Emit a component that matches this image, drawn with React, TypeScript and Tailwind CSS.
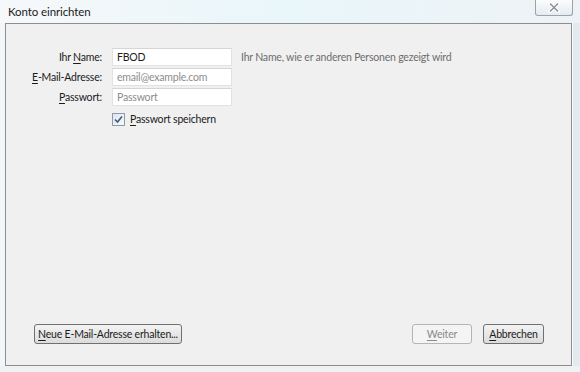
const font = { fontFamily: 'Lato, "Liberation Sans", sans-serif' };

const Key = ({ children }: { children: string }) => <span className="underline underline-offset-[2px]">{children}</span>;

const Field = ({ label, keyChar, rest, value, placeholder }: { label?: string; keyChar: string; rest: string; value?: string; placeholder?: string }) => (
  <div className="flex items-center h-[18px]">
    <div className="w-[96px] text-right text-[#1b1b1b] whitespace-nowrap">
      {label}
      <Key>{keyChar}</Key>
      {rest}
    </div>
    <div className="ml-[10px] w-[120px] h-[18px] bg-white border border-[#e2e2e2] border-t-[#d5d5d5] flex items-center px-[4px]">
      {value ? <span className="text-[#1b1b1b]">{value}</span> : <span className="text-[#8d8d8d]">{placeholder}</span>}
    </div>
  </div>
);

export default function App() {
  return (
    <div style={font} className="w-[580px] h-[372px] flex flex-col text-[10.5px] tracking-[-0.2px] leading-none overflow-hidden bg-gradient-to-r from-[#f6f8fa] via-[#e9f6fa] to-[#eef2f6]">
      {/* title bar */}
      <div className="h-[23px] flex items-start justify-between">
        <span className="mt-[6px] ml-[8px] text-[11.5px] tracking-[-0.1px] text-[#1a1a1a]">Konto einrichten</span>
        <div className="mr-[7px] w-[38px] h-[16px] border border-t-0 border-[#9aa3ad] rounded-b-[3px] bg-gradient-to-b from-[#fbfcfd] to-[#e6ebf0] flex items-center justify-center">
          <svg width="12" height="11" viewBox="0 0 12 11">
            <path d="M2 1.5 L10 9.5 M10 1.5 L2 9.5" stroke="#ffffff" strokeWidth="3.4" strokeLinecap="square" />
            <path d="M2 1.5 L10 9.5 M10 1.5 L2 9.5" stroke="#8c949c" strokeWidth="1.6" />
          </svg>
        </div>
      </div>

      <div className="flex h-[343px]">
        <div className="w-[5px] bg-[#f3f6f8]" />
        <div className="w-[567px] border border-[#8c8e90] bg-[#f0f0f0] flex flex-col pt-[24px] pb-[21px]">
          <div className="flex items-start">
            <div className="flex flex-col gap-[2px]">
              <Field label="Ihr " keyChar="N" rest="ame:" value="FBOD" />
              <Field label="" keyChar="E" rest="-Mail-Adresse:" placeholder="email@example.com" />
              <Field label="" keyChar="P" rest="asswort:" placeholder="Passwort" />
              <div className="flex items-center mt-[5px] ml-[106px]">
                <div className="w-[13px] h-[13px] border border-[#8e9aa6] bg-gradient-to-br from-[#dfe5ec] to-[#f7f9fb] flex items-center justify-center">
                  <svg width="9" height="9" viewBox="0 0 9 9">
                    <path d="M1 4.5 L3.5 7 L8 1.5" fill="none" stroke="#3b5a86" strokeWidth="1.6" />
                  </svg>
                </div>
                <span className="ml-[5px] text-[#1b1b1b]">
                  <Key>P</Key>asswort speichern
                </span>
              </div>
            </div>
            <div className="ml-[9px] h-[18px] flex items-center text-[#6e6e6e] whitespace-nowrap">Ihr Name, wie er anderen Personen gezeigt wird</div>
          </div>

          <div className="mt-auto flex items-center pl-[28px] pr-[27px]">
            <button className="w-[148px] h-[20px] border border-[#707070] rounded-[3px] bg-gradient-to-b from-[#f3f3f3] to-[#dcdcdc] text-[#1b1b1b] whitespace-nowrap">
              <Key>N</Key>eue E-Mail-Adresse erhalten...
            </button>
            <button className="ml-auto w-[60px] h-[20px] border border-[#b3b6b9] rounded-[3px] bg-[#f4f4f4] text-[#8a8a8a] whitespace-nowrap">
              <Key>W</Key>eiter
            </button>
            <button className="ml-[11px] w-[61px] h-[20px] border border-[#707070] rounded-[3px] bg-gradient-to-b from-[#f3f3f3] to-[#dcdcdc] text-[#1b1b1b] whitespace-nowrap">
              <Key>A</Key>bbrechen
            </button>
          </div>
        </div>
        <div className="w-[8px] bg-[#e3eaf0] border-l border-[#f8fafb]" />
      </div>
      <div className="flex-1 bg-[#eef2f5]" />
    </div>
  );
}
